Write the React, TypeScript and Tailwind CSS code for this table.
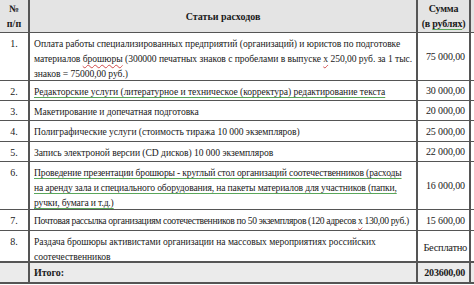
import React from "react";

const G = ({ children }: { children: React.ReactNode }) => (
  <span className="underline decoration-[#5aa65a] decoration-1 underline-offset-2">{children}</span>
);
const R = ({ children }: { children: React.ReactNode }) => (
  <span className="underline decoration-[#d04a4a] decoration-wavy decoration-1 underline-offset-2">{children}</span>
);

type RowProps = {
  h: string;
  n: string;
  sum: React.ReactNode;
  children: React.ReactNode;
  sumClass?: string;
  textClass?: string;
};

function Row({ h, n, sum, children, sumClass, textClass }: RowProps) {
  return (
    <div className={`flex ${h} border-b border-[#555]`}>
      <div className="w-[30px] shrink-0 border-r-2 border-[#555] pt-[3px] text-center text-[10px]">{n}</div>
      <div className={`w-[388px] shrink-0 border-r-2 border-[#555] pl-[4px] pt-[3px] whitespace-nowrap overflow-hidden text-[9.6px] ${textClass ?? "tracking-[-0.05px]"}`}>
        {children}
      </div>
      <div className={`w-[53px] shrink-0 border-r-2 border-[#555] flex items-center justify-end whitespace-nowrap ${sumClass ?? "pr-[4px] text-[10px] tracking-[-0.1px]"}`}>{sum}</div>
    </div>
  );
}

export default function App() {
  return (
    <div
      className="w-[474px] h-[285px] bg-white text-[#1a1a1a] text-[10px] leading-[15px] overflow-hidden"
      style={{ fontFamily: '"Liberation Serif", "DejaVu Serif", serif' }}
    >
      <div className="flex h-[33px] border-b border-[#555] bg-[#e4e4e4] font-bold">
        <div className="w-[30px] shrink-0 border-r-2 border-[#555] flex flex-col items-center pt-[1px]">
          <span>№</span>
          <span>п/п</span>
        </div>
        <div className="w-[388px] shrink-0 border-r-2 border-[#555] flex items-center justify-center">Статьи расходов</div>
        <div className="w-[53px] shrink-0 border-r-2 border-[#555] flex flex-col items-center pt-[1px] tracking-[-0.2px] whitespace-nowrap">
          <span>Сумма</span>
          <span>
            (в <G>рублях</G>)
          </span>
        </div>
      </div>
      <Row h="h-[48px]" n="1." sum="75 000,00">
        Оплата работы специализированных предприятий (организаций) и юристов по подготовке
        <br />
        материалов <R>брошюры</R> (300000 печатных знаков с пробелами в выпуске <R>х</R> 250,00 руб. за 1 тыс.
        <br />
        знаков = 75000,00 руб.)
      </Row>
      <Row h="h-[20px]" n="2." sum="30 000,00">
        <G>Редакторские услуги (литературное и техническое (корректура) редактирование текста</G>
      </Row>
      <Row h="h-[20px]" n="3." sum="20 000,00">
        Макетирование и допечатная подготовка
      </Row>
      <Row h="h-[21px]" n="4." sum="25 000,00">
        Полиграфические услуги (стоимость тиража 10 000 экземпляров)
      </Row>
      <Row h="h-[20px]" n="5." sum="22 000,00">
        Запись электроной версии (CD дисков) 10 000 экземпляров
      </Row>
      <Row h="h-[48px]" n="6." sum="16 000,00" textClass="tracking-[-0.15px]">
        <G>Проведение презентации брошюры - круглый стол организаций соотечественников (расходы</G>
        <br />
        <G>на аренду зала и специального оборудования, на пакеты материалов для участников (папки,</G>
        <br />
        <G>ручки, бумага и т.д.)</G>
      </Row>
      <Row h="h-[21px]" n="7." sum="15 600,00" textClass="tracking-[-0.35px]">
        Почтовая рассылка организациям соотечественников по 50 экземпляров (120 адресов <R>х</R> 130,00 руб.)
      </Row>
      <Row h="h-[31px]" n="8." sum="Бесплатно" sumClass="text-[10.5px] pr-[2px] pt-[3px] tracking-[-0.3px]">
        Раздача брошюры активистами организации на массовых мероприятиях российских
        <br />
        соотечественников
      </Row>
      <div className="flex h-[22px] border-t border-b-2 border-[#555] bg-[#ebebeb] font-bold">
        <div className="w-[30px] shrink-0 border-r-2 border-[#555]"></div>
        <div className="w-[388px] shrink-0 border-r-2 border-[#555] pl-[4px] flex items-center">Итого:</div>
        <div className="w-[53px] shrink-0 border-r-2 border-[#555] flex items-center justify-end pr-[4px] tracking-[-0.2px]">203600,00</div>
      </div>
    </div>
  );
}
